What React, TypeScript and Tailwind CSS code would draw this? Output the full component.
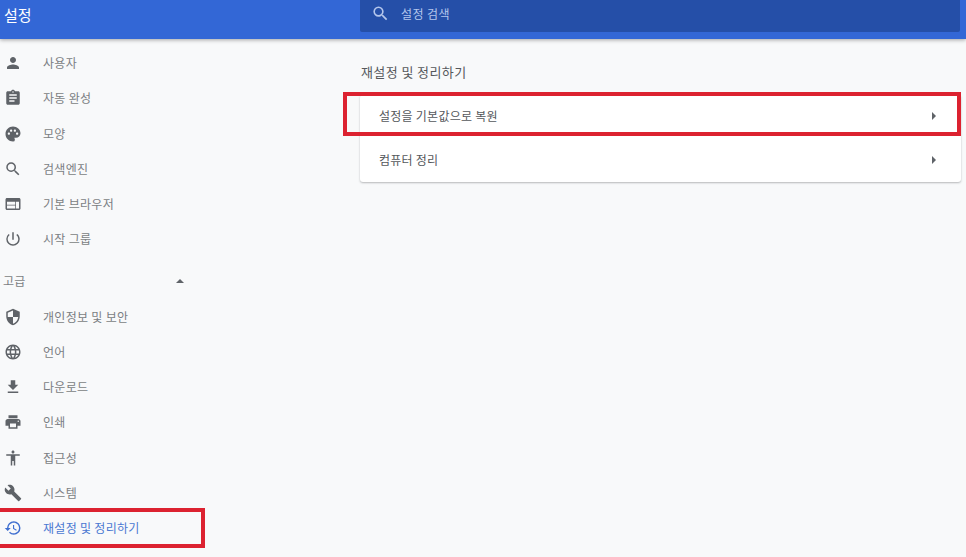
import type { IconType } from "react-icons"
import {
  MdAccessibility,
  MdAssignment,
  MdBuild,
  MdFileDownload,
  MdLanguage,
  MdPalette,
  MdPerson,
  MdPowerSettingsNew,
  MdPrint,
  MdRestore,
  MdSearch,
  MdSecurity,
  MdWeb,
} from "react-icons/md"

const basicItems: [IconType, string][] = [
  [MdPerson, "사용자"],
  [MdAssignment, "자동 완성"],
  [MdPalette, "모양"],
  [MdSearch, "검색엔진"],
  [MdWeb, "기본 브라우저"],
  [MdPowerSettingsNew, "시작 그룹"],
]

const advancedItems: [IconType, string][] = [
  [MdSecurity, "개인정보 및 보안"],
  [MdLanguage, "언어"],
  [MdFileDownload, "다운로드"],
  [MdPrint, "인쇄"],
  [MdAccessibility, "접근성"],
  [MdBuild, "시스템"],
]

function NavItem({ icon: Icon, label, active }: { icon: IconType; label: string; active?: boolean }) {
  return (
    <div className="flex h-[35.25px] items-center">
      <Icon className={`ml-[3.5px] h-[18px] w-[18px] shrink-0 ${active ? "text-[#3f6fd0]" : "text-[#5f6368]"}`} />
      <span className={`ml-[21.5px] text-[12px] tracking-[0.3px] ${active ? "text-[#4a78d2]" : "text-[#7b7e83]"}`}>
        {label}
      </span>
    </div>
  )
}

function CardRow({ label }: { label: string }) {
  return (
    <div className="flex h-[43.5px] items-center justify-between pl-[19px] pr-[25px] text-[12px] tracking-[0.25px] text-[#55585c]">
      <span>{label}</span>
      <span className="h-0 w-0 border-y-[4px] border-l-[4px] border-y-transparent border-l-[#5f6368]" />
    </div>
  )
}

export default function App() {
  return (
    <div
      className="relative h-[557px] w-[966px] overflow-hidden bg-[#f8f9fa]"
      style={{ fontFamily: '"Noto Sans CJK KR", "Noto Sans", sans-serif' }}
    >
      {/* Header */}
      <header className="flex h-[39px] items-start bg-[#3367d6] shadow-[0_1px_4px_rgba(0,0,0,0.35)]">
        <div className="w-[360px] pl-[4px] pt-[5px] text-[15px] leading-[20px] text-white">설정</div>
        <div className="flex h-[32px] w-[600px] items-center rounded-b-[2px] bg-[#254fa8] pb-[5px] pl-[11px] text-[#b4c6ec]">
          <MdSearch className="h-[19px] w-[19px]" />
          <span className="ml-[11px] text-[12px] tracking-[0.4px]">설정 검색</span>
        </div>
      </header>

      <div className="flex">
        {/* Sidebar */}
        <nav className="w-[360px] shrink-0 pt-[6.5px]">
          {basicItems.map(([icon, label]) => (
            <NavItem key={label} icon={icon} label={label} />
          ))}
          <div className="flex h-[42px] items-center justify-between pl-[3px] pr-[176px] pt-[6px] text-[12px] tracking-[0.3px] text-[#7b7e83]">
            <span>고급</span>
            <span className="h-0 w-0 border-x-[4px] border-b-[4px] border-x-transparent border-b-[#5f6368]" />
          </div>
          {advancedItems.map(([icon, label]) => (
            <NavItem key={label} icon={icon} label={label} />
          ))}
          <NavItem icon={MdRestore} label="재설정 및 정리하기" active />
        </nav>

        {/* Content */}
        <main className="w-[601px] pt-[23px]">
          <h2 className="ml-[1px] text-[13px] leading-[20px] font-normal tracking-[0.4px] text-[#55585c]">
            재설정 및 정리하기
          </h2>
          <div className="mt-[12.5px] rounded-[3px] bg-white shadow-[0_1px_2px_rgba(60,64,67,0.35)]">
            <CardRow label="설정을 기본값으로 복원" />
            <CardRow label="컴퓨터 정리" />
          </div>
        </main>
      </div>

      {/* Red annotation boxes */}
      <div className="absolute top-[92px] left-[343px] h-[44px] w-[618px] border-[4px] border-[#dc2230]" />
      <div className="absolute top-[508px] left-[-4px] h-[40px] w-[209px] border-[4px] border-[#dc2230]" />
    </div>
  )
}
